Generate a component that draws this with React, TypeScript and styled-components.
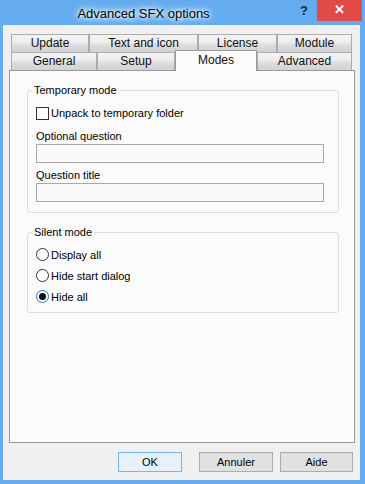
import React, { useState } from "react";
import styled, { createGlobalStyle, css } from "styled-components";

const GlobalStyle = createGlobalStyle`
  html, body {
    margin: 0;
    padding: 0;
    background: #ffffff;
  }
  body {
    font-family: "Liberation Sans", Arial, sans-serif;
    font-size: 11px;
    color: #000;
  }
`;

const Window = styled.div`
  width: 365px;
  height: 484px;
  box-sizing: border-box;
  background: #64acef;
  padding: 0 5px 4px 3px;
  display: flex;
  flex-direction: column;
`;

const TitleBar = styled.div`
  height: 25px;
  display: flex;
  align-items: flex-start;
  margin-left: -3px;
  margin-right: -5px;
`;

const Title = styled.div`
  flex: 1;
  text-align: center;
  font-size: 13px;
  line-height: 27px;
  margin-right: 4px;
  color: #000;
  text-shadow: 0 0 4px #fff, 0 0 6px #fff, 0 0 8px #e8f3ff;
`;

const HelpButton = styled.div`
  width: 26px;
  height: 21px;
  font-size: 13px;
  font-weight: bold;
  line-height: 21px;
  text-align: center;
  color: #17263f;
`;

const CloseButton = styled.div`
  width: 45px;
  height: 21px;
  margin: 0 3px 0 0;
  background: #e04a47;
  color: #fff;
  font-size: 13px;
  font-weight: bold;
  line-height: 20px;
  text-align: center;
`;

const Client = styled.div`
  flex: 1;
  background: #f0f0f0;
  padding: 9px 5px 8px 6px;
  display: flex;
  flex-direction: column;
`;

const TabStrip = styled.div`
  margin: 0 3px 0 2px;
`;

const TabRow = styled.div`
  display: flex;
  height: 18px;
`;

const Tab = styled.div<{ $w: number; $active?: boolean }>`
  width: ${(p) => p.$w}px;
  height: 18px;
  box-sizing: border-box;
  border: 1px solid #acacac;
  border-bottom: none;
  background: linear-gradient(
    to bottom,
    #f4f4f4 0%,
    #ececec 45%,
    #dedede 55%,
    #d2d2d2 100%
  );
  font-size: 12px;
  line-height: 17px;
  text-align: center;
  white-space: nowrap;
  color: #111;
  ${(p) =>
    p.$active &&
    css`
      position: relative;
      z-index: 2;
      height: 21px;
      margin-top: -2px;
      background: #fbfbfb;
      border-color: #9a9a9a;
      line-height: 19px;
    `}
`;

const Panel = styled.div`
  flex: 1;
  background: #fbfbfb;
  border: 1px solid #9a9a9a;
  padding: 19px 15px 0 17px;
`;

const Group = styled.div<{ $gap?: number; $pt: number; $pb: number }>`
  position: relative;
  border: 1px solid #dcdcdc;
  border-radius: 3px;
  margin-top: ${(p) => p.$gap ?? 0}px;
  padding: ${(p) => p.$pt}px 8px ${(p) => p.$pb}px 8px;
`;

const Legend = styled.span`
  position: absolute;
  top: -8px;
  left: 4px;
  padding: 0 2px;
  background: #fbfbfb;
  line-height: 14px;
`;

const CheckRow = styled.label`
  display: flex;
  align-items: center;
  height: 16px;
  gap: 2px;
`;

const CheckBox = styled.span`
  width: 13px;
  height: 13px;
  box-sizing: border-box;
  border: 1px solid #333;
  background: #fff;
`;

const FieldLabel = styled.div<{ $mt: number }>`
  margin-top: ${(p) => p.$mt}px;
  line-height: 16px;
  height: 16px;
`;

const TextField = styled.div`
  width: 288px;
  height: 19px;
  box-sizing: border-box;
  border: 1px solid #a9a9a9;
  background: #fafafa;
`;

const RadioRow = styled.label`
  display: flex;
  align-items: center;
  height: 21px;
  gap: 2px;
`;

const RadioDot = styled.span<{ $checked?: boolean }>`
  position: relative;
  width: 13px;
  height: 13px;
  box-sizing: border-box;
  border-radius: 50%;
  border: 1px solid ${(p) => (p.$checked ? "#2e6fb2" : "#333")};
  background: #fff;
  ${(p) =>
    p.$checked &&
    css`
      &::after {
        content: "";
        position: absolute;
        left: 2px;
        top: 2px;
        width: 7px;
        height: 7px;
        border-radius: 50%;
        background: #111;
      }
    `}
`;

const ButtonBar = styled.div`
  display: flex;
  justify-content: flex-end;
  margin-top: 9px;
  padding-right: 2px;
`;

const Button = styled.div<{ $w: number; $ml: number; $default?: boolean }>`
  width: ${(p) => p.$w}px;
  height: 20px;
  margin-left: ${(p) => p.$ml}px;
  box-sizing: border-box;
  border: 1px solid ${(p) => (p.$default ? "#7ab2e6" : "#adadad")};
  background: ${(p) => (p.$default ? "#e5f1fb" : "#e1e1e1")};
  line-height: 18px;
  text-align: center;
`;

const topTabs = [
  { label: "Update", w: 78 },
  { label: "Text and icon", w: 109 },
  { label: "License", w: 79 },
  { label: "Module", w: 75 },
];

const bottomTabs = [
  { label: "General", w: 86 },
  { label: "Setup", w: 78 },
  { label: "Modes", w: 82 },
  { label: "Advanced", w: 95 },
];

const silentOptions = ["Display all", "Hide start dialog", "Hide all"];

const App: React.FC = () => {
  const [silent, setSilent] = useState(2);
  const active = "Modes";
  return (
    <>
      <GlobalStyle />
      <Window>
        <TitleBar>
          <Title>Advanced SFX options</Title>
          <HelpButton>?</HelpButton>
          <CloseButton>✕</CloseButton>
        </TitleBar>
        <Client>
          <TabStrip>
            <TabRow>
              {topTabs.map((t) => (
                <Tab key={t.label} $w={t.w}>
                  {t.label}
                </Tab>
              ))}
            </TabRow>
            <TabRow>
              {bottomTabs.map((t) => (
                <Tab key={t.label} $w={t.w} $active={t.label === active}>
                  {t.label}
                </Tab>
              ))}
            </TabRow>
          </TabStrip>
          <Panel>
            <Group $pt={14} $pb={10}>
              <Legend>Temporary mode</Legend>
              <CheckRow>
                <CheckBox />
                Unpack to temporary folder
              </CheckRow>
              <FieldLabel $mt={7}>Optional question</FieldLabel>
              <TextField />
              <FieldLabel $mt={4}>Question title</FieldLabel>
              <TextField />
            </Group>
            <Group $gap={19} $pt={11} $pb={5}>
              <Legend>Silent mode</Legend>
              {silentOptions.map((o, i) => (
                <RadioRow key={o} onClick={() => setSilent(i)}>
                  <RadioDot $checked={silent === i} />
                  {o}
                </RadioRow>
              ))}
            </Group>
          </Panel>
          <ButtonBar>
            <Button $w={64} $ml={0} $default>
              OK
            </Button>
            <Button $w={74} $ml={17}>
              Annuler
            </Button>
            <Button $w={73} $ml={7}>
              Aide
            </Button>
          </ButtonBar>
        </Client>
      </Window>
    </>
  );
};

export default App;
